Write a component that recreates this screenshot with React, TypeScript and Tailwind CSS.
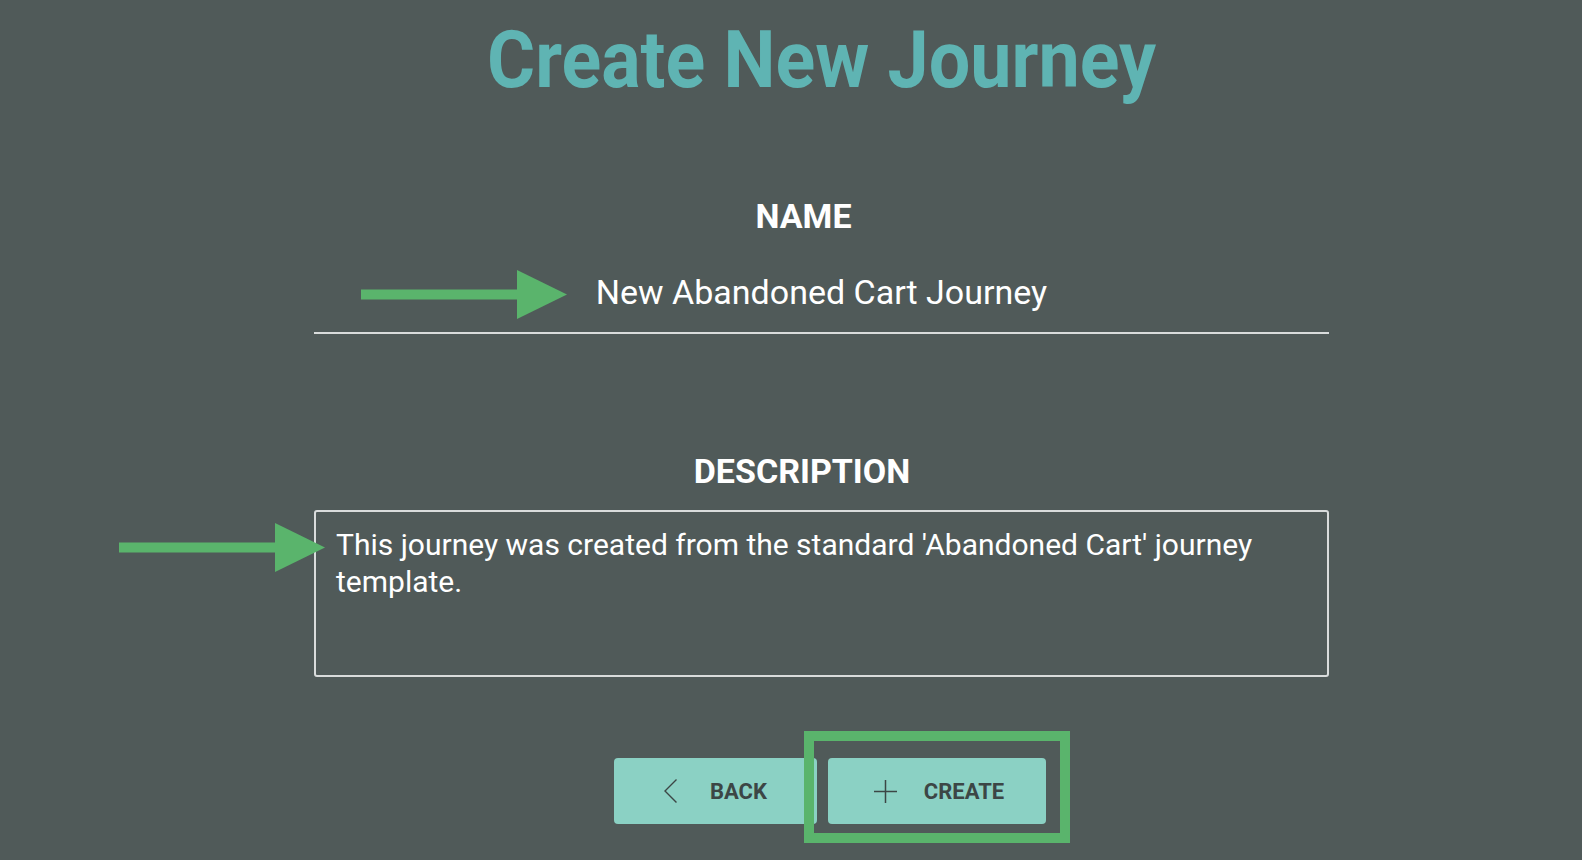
import { useState } from 'react';

function Arrow({ className }: { className: string }) {
  return (
    <svg className={className} width="206" height="49" viewBox="0 0 206 49" fill="#5ab46c">
      <rect x="0" y="19.5" width="157" height="10" />
      <polygon points="156,0 206,24.5 156,49" />
    </svg>
  );
}

export default function App() {
  const [name] = useState('New Abandoned Cart Journey');
  const [description] = useState(
    "This journey was created from the standard 'Abandoned Cart' journey template."
  );

  return (
    <div className="min-h-screen w-full bg-[#505a59] font-['Roboto',sans-serif] overflow-hidden">
      <div className="ml-[314px] w-[1015px] flex flex-col">
        {/* Title */}
        <h1 className="pt-[20px] text-center text-[80px] leading-[80px] font-bold text-[#5fb4b3] scale-x-[0.92]">
          Create New Journey
        </h1>

        {/* Name */}
        <div className="mt-[99px] pr-[36px] text-center text-[34px] leading-[34px] font-bold text-white">
          NAME
        </div>
        <div className="relative mt-[42px] border-b-2 border-[#d9dcdc] pb-[23px]">
          <Arrow className="absolute left-[47px] top-[-5px]" />
          <div className="text-center text-[34px] leading-[34px] text-white">{name}</div>
        </div>

        {/* Description */}
        <div className="mt-[120px] pr-[39px] text-center text-[34px] leading-[34px] font-bold text-white">
          DESCRIPTION
        </div>
        <div className="relative mt-[22px] h-[167px] rounded-[3px] border-2 border-[#d9dcdc] px-[20px] pt-[14px]">
          <Arrow className="absolute left-[-197px] top-[11px]" />
          <p className="text-[30px] leading-[37px] text-white">{description}</p>
        </div>

        {/* Actions */}
        <div className="mt-[81px] flex justify-center gap-[11px] pl-[17px]">
          <button
            type="button"
            className="flex h-[66px] w-[203px] items-center justify-center gap-[33px] rounded-[4px] bg-[#8bd1c4] text-[22px] font-bold text-[#3c4645]"
          >
            <svg width="13" height="24" viewBox="0 0 13 24" fill="none" stroke="#3c4645" strokeWidth="1.4">
              <polyline points="12.5,0.5 1,12 12.5,23.5" />
            </svg>
            BACK
          </button>
          <div className="relative">
            <div className="absolute left-[-24px] top-[-27px] h-[112px] w-[266px] border-[10px] border-[#5ab46c]" />
            <button
              type="button"
              className="relative flex h-[66px] w-[218px] items-center justify-center gap-[27px] rounded-[4px] bg-[#8bd1c4] pl-[4px] text-[22px] font-bold text-[#3c4645]"
            >
              <svg width="23" height="23" viewBox="0 0 23 23" fill="none" stroke="#3c4645" strokeWidth="1.5">
                <line x1="11.5" y1="0" x2="11.5" y2="23" />
                <line x1="0" y1="11.5" x2="23" y2="11.5" />
              </svg>
              CREATE
            </button>
          </div>
        </div>
      </div>
    </div>
  );
}
